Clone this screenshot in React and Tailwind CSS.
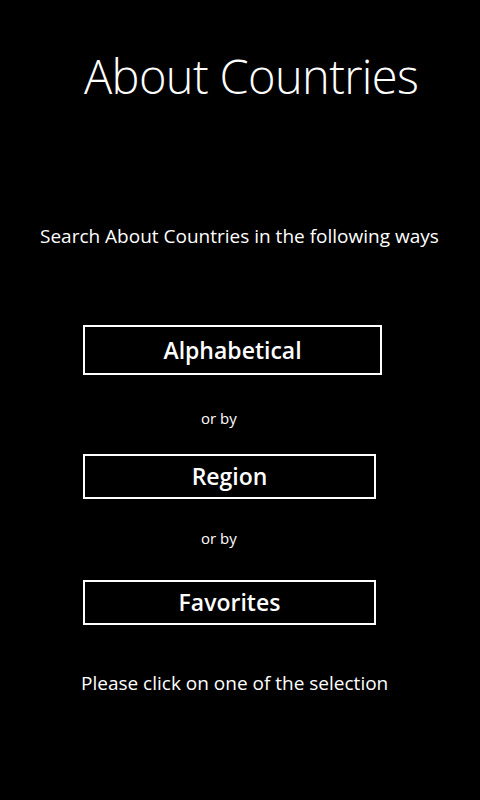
import React from 'react';

const font = { fontFamily: '"Open Sans", "Noto Sans", sans-serif' };

const ChoiceButton = ({ label, className }) => (
  <button
    className={`flex items-center justify-center border-2 border-white bg-black text-white text-[23px] font-semibold leading-none ${className}`}
  >
    {label}
  </button>
);

const OrBy = ({ className }) => (
  <div className={`ml-[201px] text-[15px] leading-none text-white ${className}`}>or by</div>
);

export default function App() {
  return (
    <div
      className="w-[480px] h-[800px] bg-black text-white flex flex-col items-start overflow-hidden"
      style={font}
    >
      {/* Title */}
      <h1 className="ml-[84px] mt-[53px] text-[47px] font-light leading-none tracking-[-0.65px]">
        About Countries
      </h1>

      <p className="ml-[40px] mt-[127px] text-[19px] leading-none">
        Search About Countries in the following ways
      </p>

      <ChoiceButton label="Alphabetical" className="ml-[83px] mt-[79px] w-[299px] h-[50px]" />
      <OrBy className="mt-[36px]" />
      <ChoiceButton label="Region" className="ml-[83px] mt-[28px] w-[293px] h-[45px]" />
      <OrBy className="mt-[32px]" />
      <ChoiceButton label="Favorites" className="ml-[83px] mt-[34px] w-[293px] h-[45px]" />

      <p className="ml-[81px] mt-[49px] text-[19px] leading-none">
        Please click on one of the selection
      </p>
    </div>
  );
}
